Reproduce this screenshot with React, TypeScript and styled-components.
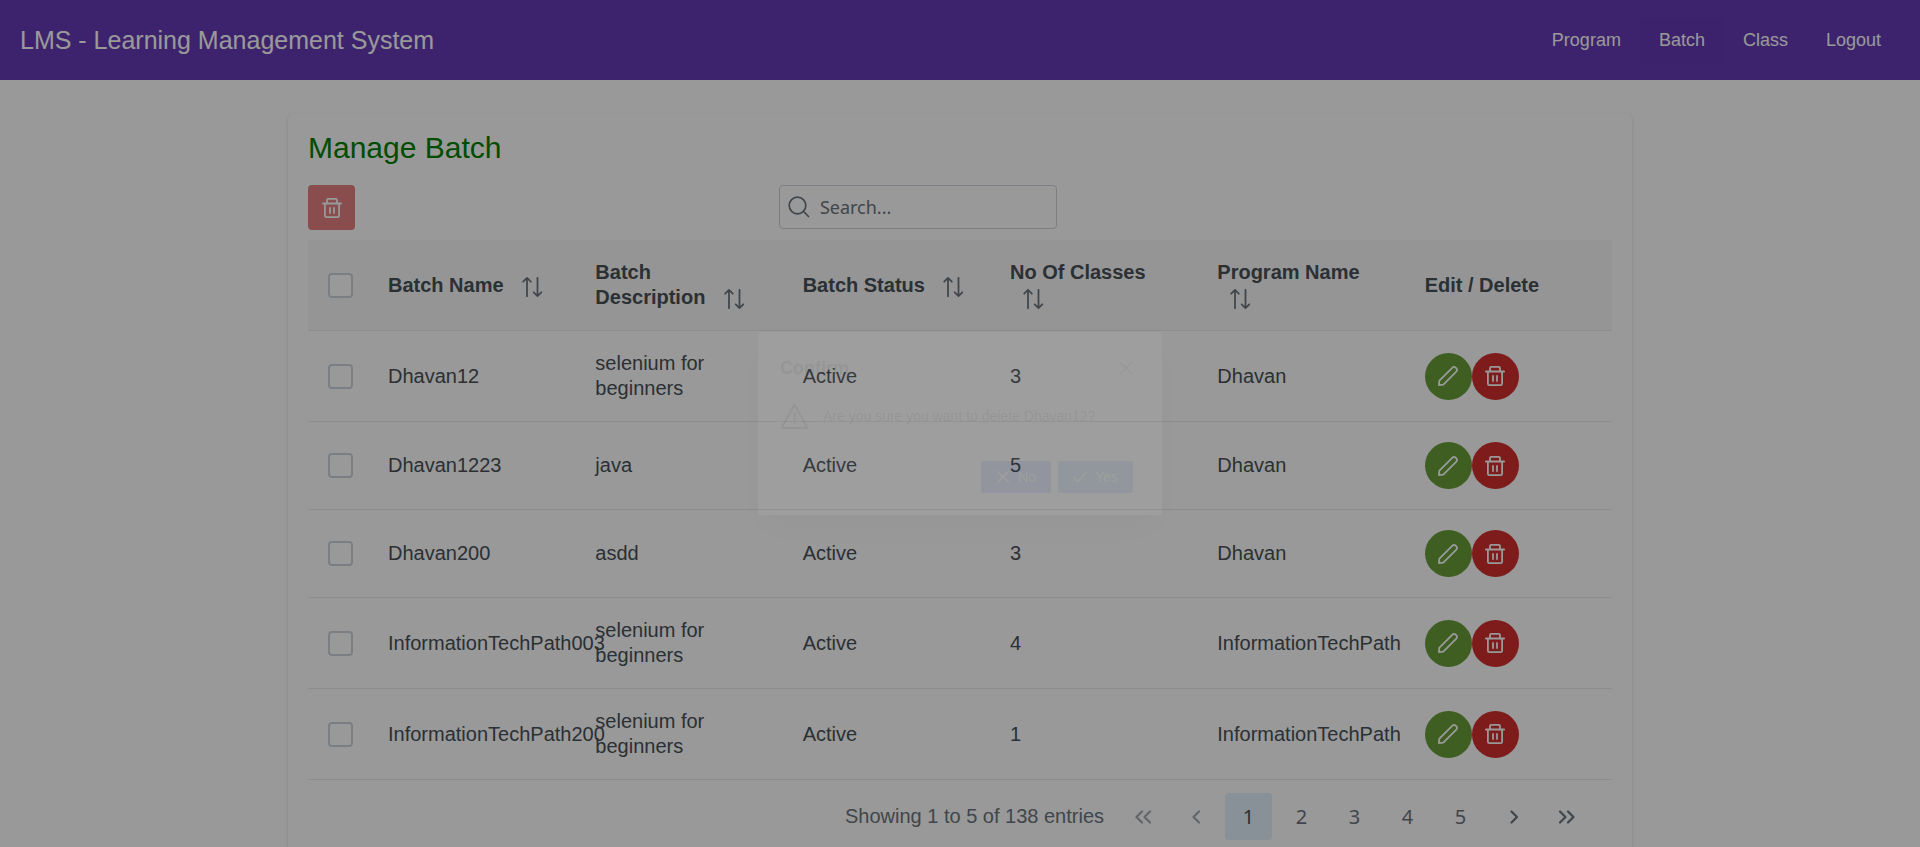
import React from "react";
import styled, { createGlobalStyle, css } from "styled-components";

const GlobalStyle = createGlobalStyle`
  *, *::before, *::after { box-sizing: border-box; }
  body {
    margin: 0;
    overflow: hidden;
    background: #ffffff;
    color: #495057;
    font-family: "Liberation Sans", Arial, sans-serif;
    font-size: 20px;
    line-height: 25px;
  }
`;

/* ---------- Icons ---------- */

const Icon = styled.svg<{ $size?: number }>`
  display: block;
  flex: none;
  width: ${(p) => p.$size ?? 20}px;
  height: ${(p) => p.$size ?? 20}px;
  fill: none;
  stroke: currentColor;
  stroke-linecap: round;
  stroke-linejoin: round;
`;

const TrashIcon = () => (
  <Icon viewBox="0 0 20 20" strokeWidth="1.8" aria-hidden="true">
    <path d="M.9 5.5h18.200" />
    <path d="M5 5.400V2.100c0-.7.5-1.200 1.200-1.200h7.600c.7 0 1.200.5 1.200 1.200v3.300" />
    <path d="M2.900 5.800v11.900c0 .8.6 1.400 1.400 1.400h11.400c.8 0 1.400-.6 1.400-1.400V5.800" />
    <path d="M8 10v5M12 10v5" />
  </Icon>
);

const PencilIcon = () => (
  <Icon viewBox="0 0 20 20" strokeWidth="1.8" aria-hidden="true">
    <path d="M.9 19.100l.5-4.400L14.200 1.900c1.100-1.200 2.500-1.200 3.400-.3l.8.8c.9.9.9 2.300-.3 3.400L5.300 18.600z" />
  </Icon>
);

const SearchIcon = () => (
  <Icon $size={22} viewBox="0 0 22 22" strokeWidth="1.7" aria-hidden="true">
    <circle cx="9.500" cy="9.500" r="8.300" />
    <path d="M15.500 15.500l5 5" />
  </Icon>
);

const SortSvg = styled(Icon)`
  display: inline-block;
  width: 24px;
  height: 20px;
  margin-left: 10px;
  vertical-align: -5px;
  color: #6c757d;
`;

const SortIcon = () => (
  <SortSvg viewBox="0 0 24 20" strokeWidth="1.8" aria-hidden="true">
    <path d="M8 19.200V1M4.200 4.700L8 .9l3.800 3.800" />
    <path d="M18.500 .8V19M14.700 15.300l3.800 3.800 3.800-3.800" />
  </SortSvg>
);

const Chevrons = ({ left, double }: { left?: boolean; double?: boolean }) => (
  <Icon viewBox="0 0 20 20" strokeWidth="2.2" aria-hidden="true">
    {left ? (
      <path d={double ? "M9 4.500L3.500 10 9 15.500M17 4.500L11.500 10l5.500 5.500" : "M13 4.500L7.500 10l5.500 5.500"} />
    ) : (
      <path d={double ? "M3 4.500L8.500 10 3 15.500M11 4.500l5.500 5.500-5.500 5.500" : "M7.500 4.500L13 10l-5.500 5.500"} />
    )}
  </Icon>
);

/* ---------- Top bar ---------- */

const TopBar = styled.header`
  display: flex;
  align-items: center;
  justify-content: space-between;
  height: 80px;
  padding: 0 20px;
  background: #673ab7;
  color: #ffffff;
`;

const Brand = styled.span`
  font-size: 25px;
  line-height: 30px;
`;

const Nav = styled.nav`
  display: flex;
`;

const NavLink = styled.a<{ $active?: boolean }>`
  padding: 0 19px;
  border-radius: 4px;
  color: inherit;
  font-size: 18px;
  line-height: 45px;
  text-decoration: none;
  ${(p) => p.$active && css`background: rgba(0, 0, 0, 0.01);`}
`;

/* ---------- Card ---------- */

const Card = styled.main`
  width: 70%;
  margin: 34px auto 0;
  padding: 16px 20px;
  border-radius: 5px;
  background: #ffffff;
  box-shadow: 0 2px 1px -1px rgba(0, 0, 0, 0.2), 0 1px 1px rgba(0, 0, 0, 0.14),
    0 1px 3px rgba(0, 0, 0, 0.12);
`;

const Title = styled.h1`
  margin: 0 0 20px;
  color: green;
  font-size: 30px;
  font-weight: 400;
  line-height: 35px;
`;

const Toolbar = styled.div`
  display: grid;
  grid-template-columns: 13fr 23fr;
  align-items: start;
  margin-bottom: 10px;
`;

const IconButton = styled.button<{ $tone: "success" | "danger"; $round?: boolean }>`
  display: inline-flex;
  align-items: center;
  justify-content: center;
  width: 47px;
  height: ${(p) => (p.$round ? 47 : 45)}px;
  padding: 0;
  border: 0;
  border-radius: ${(p) => (p.$round ? "50%" : "4px")};
  background: ${(p) => (p.$tone === "success" ? "#689f38" : "#d32f2f")};
  color: #ffffff;

  &:disabled {
    opacity: 0.6;
  }
`;

const SearchBox = styled.label`
  display: flex;
  align-items: center;
  gap: 10px;
  width: 278px;
  height: 44px;
  padding: 0 8px;
  border: 1px solid #ced4da;
  border-radius: 4px;
  color: #6c757d;
`;

const SearchInput = styled.input`
  flex: 1;
  min-width: 0;
  padding: 0;
  border: 0;
  outline: 0;
  background: none;
  color: #495057;
  font-family: "Noto Sans", sans-serif;
  font-size: 18px;

  &::placeholder {
    color: #6c757d;
    opacity: 1;
  }
`;

/* ---------- Table ---------- */

const Table = styled.table`
  width: 100%;
  border-collapse: separate;
  border-spacing: 0;
  table-layout: fixed;
`;

const cell = css`
  padding: 20px;
  border-bottom: 1px solid #e9ecef;
  text-align: left;
  vertical-align: middle;
`;

const HeadCell = styled.th<{ $check?: boolean }>`
  ${cell}
  ${(p) => p.$check && css`width: 60px;`}
  background: #f8f9fa;
  font-weight: 700;
`;

const Cell = styled.td`
  ${cell}
`;

const Checkbox = styled.input`
  display: block;
  appearance: none;
  width: 25px;
  height: 25px;
  margin: 0;
  border: 2px solid #ced4da;
  border-radius: 4px;
  background: #ffffff;
`;

const RowActions = styled.div`
  display: flex;
`;

/* ---------- Paginator ---------- */

const Paginator = styled.nav`
  display: flex;
  align-items: center;
  justify-content: flex-end;
  padding: 10px 19px;
  color: #6c757d;
`;

const PageReport = styled.span`
  margin-right: 12px;
`;

const PageButton = styled.button<{ $current?: boolean }>`
  display: inline-flex;
  align-items: center;
  justify-content: center;
  width: 47px;
  height: 47px;
  margin: 3px;
  padding: 0;
  border: 0;
  border-radius: 4px;
  background: ${(p) => (p.$current ? "#e3f2fd" : "transparent")};
  color: ${(p) => (p.$current ? "#495057" : "#6c757d")};
  font-family: "Noto Sans", sans-serif;
  font-size: 20px;

  &:disabled {
    opacity: 0.6;
  }
`;

/* ---------- Confirm dialog, fading in ---------- */

const Mask = styled.div`
  position: fixed;
  inset: 0;
  display: flex;
  align-items: center;
  justify-content: center;
  background: rgba(0, 0, 0, 0.4);
`;

const Dialog = styled.div`
  width: 404px;
  padding: 22px 29px 22px 22px;
  border-radius: 3px;
  background: #ffffff;
  opacity: 0.05;
  box-shadow: 0 11px 15px -7px rgba(0, 0, 0, 0.2), 0 24px 38px 3px rgba(0, 0, 0, 0.14),
    0 9px 46px 8px rgba(0, 0, 0, 0.12);
`;

const DialogHead = styled.div`
  display: flex;
  align-items: center;
  justify-content: space-between;
`;

const DialogTitle = styled.h2`
  margin: 0;
  font-size: 18px;
  font-weight: 700;
  line-height: 28px;
`;

const CloseButton = styled.button`
  padding: 0;
  border: 0;
  background: none;
  color: #6c757d;
`;

const DialogBody = styled.div`
  display: flex;
  align-items: center;
  gap: 14px;
  margin: 20px 0 30px;
  font-size: 14px;
`;

const DialogFoot = styled.div`
  display: flex;
  justify-content: flex-end;
  gap: 7px;
`;

const DialogButton = styled.button<{ $focused?: boolean }>`
  display: inline-flex;
  align-items: center;
  gap: 8px;
  height: 32px;
  padding: 0 15px;
  border: 0;
  border-radius: 2px;
  background: ${(p) => (p.$focused ? "#1a4fe0" : "#0d7ed6")};
  color: #ffffff;
  font-family: inherit;
  font-size: 14px;
`;

/* ---------- Data ---------- */

const columns = ["Batch Name", "Batch Description", "Batch Status", "No Of Classes", "Program Name"];

const batches = [
  { name: "Dhavan12", description: "selenium for beginners", status: "Active", classes: 3, program: "Dhavan" },
  { name: "Dhavan1223", description: "java", status: "Active", classes: 5, program: "Dhavan" },
  { name: "Dhavan200", description: "asdd", status: "Active", classes: 3, program: "Dhavan" },
  { name: "InformationTechPath003", description: "selenium for beginners", status: "Active", classes: 4, program: "InformationTechPath" },
  { name: "InformationTechPath200", description: "selenium for beginners", status: "Active", classes: 1, program: "InformationTechPath" },
];

export default function App() {
  return (
    <>
      <GlobalStyle />
      <TopBar>
        <Brand>LMS - Learning Management System</Brand>
        <Nav>
          {["Program", "Batch", "Class", "Logout"].map((item) => (
            <NavLink key={item} href={`#${item.toLowerCase()}`} $active={item === "Batch"}>
              {item}
            </NavLink>
          ))}
        </Nav>
      </TopBar>

      <Card>
        <Title>Manage Batch</Title>
        <Toolbar>
          <IconButton $tone="danger" disabled aria-label="Delete selected batches">
            <TrashIcon />
          </IconButton>
          <SearchBox>
            <SearchIcon />
            <SearchInput type="text" placeholder="Search..." aria-label="Search batches" />
          </SearchBox>
        </Toolbar>

        <Table>
          <thead>
            <tr>
              <HeadCell $check>
                <Checkbox type="checkbox" aria-label="Select all batches" />
              </HeadCell>
              {columns.map((column) => (
                <HeadCell key={column}>
                  {column} <SortIcon />
                </HeadCell>
              ))}
              <HeadCell>Edit / Delete</HeadCell>
            </tr>
          </thead>
          <tbody>
            {batches.map((batch) => (
              <tr key={batch.name}>
                <Cell>
                  <Checkbox type="checkbox" aria-label={`Select ${batch.name}`} />
                </Cell>
                <Cell>{batch.name}</Cell>
                <Cell>{batch.description}</Cell>
                <Cell>{batch.status}</Cell>
                <Cell>{batch.classes}</Cell>
                <Cell>{batch.program}</Cell>
                <Cell>
                  <RowActions>
                    <IconButton $tone="success" $round aria-label={`Edit ${batch.name}`}>
                      <PencilIcon />
                    </IconButton>
                    <IconButton $tone="danger" $round aria-label={`Delete ${batch.name}`}>
                      <TrashIcon />
                    </IconButton>
                  </RowActions>
                </Cell>
              </tr>
            ))}
          </tbody>
        </Table>

        <Paginator aria-label="Pages">
          <PageReport>Showing 1 to 5 of 138 entries</PageReport>
          <PageButton disabled aria-label="First page"><Chevrons left double /></PageButton>
          <PageButton disabled aria-label="Previous page"><Chevrons left /></PageButton>
          {[1, 2, 3, 4, 5].map((page) => (
            <PageButton key={page} $current={page === 1}>{page}</PageButton>
          ))}
          <PageButton aria-label="Next page"><Chevrons /></PageButton>
          <PageButton aria-label="Last page"><Chevrons double /></PageButton>
        </Paginator>
      </Card>

      <Mask>
        <Dialog role="dialog" aria-labelledby="confirm-title">
          <DialogHead>
            <DialogTitle id="confirm-title">Confirm</DialogTitle>
            <CloseButton aria-label="Close">
              <Icon $size={14} viewBox="0 0 14 14" strokeWidth="1.2" aria-hidden="true">
                <path d="M1.500 1.500l11 11M12.500 1.500l-11 11" />
              </Icon>
            </CloseButton>
          </DialogHead>
          <DialogBody>
            <Icon $size={29} viewBox="0 0 29 29" strokeWidth="2" aria-hidden="true">
              <path d="M14.500 2.500L27.500 26h-26zM14.500 10.500v7M14.500 21v1" />
            </Icon>
            <span>Are you sure you want to delete Dhavan12?</span>
          </DialogBody>
          <DialogFoot>
            <DialogButton $focused>
              <Icon $size={14} viewBox="0 0 14 14" strokeWidth="1.5" aria-hidden="true">
                <path d="M1.500 1.500l11 11M12.500 1.500l-11 11" />
              </Icon>
              No
            </DialogButton>
            <DialogButton>
              <Icon $size={14} viewBox="0 0 14 14" strokeWidth="1.5" aria-hidden="true">
                <path d="M.8 7.500l4 4.200L13.300 2.500" />
              </Icon>
              Yes
            </DialogButton>
          </DialogFoot>
        </Dialog>
      </Mask>
    </>
  );
}
